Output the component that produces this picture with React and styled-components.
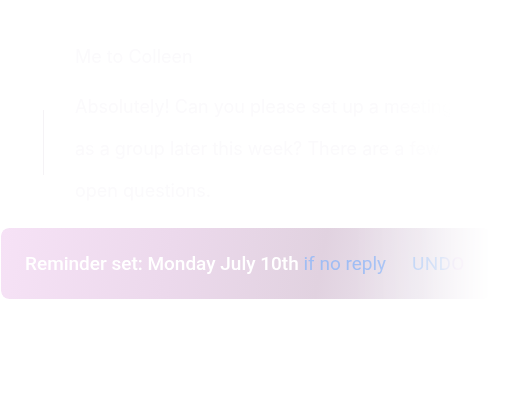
import React from 'react'
import styled, { createGlobalStyle } from 'styled-components'

const Global = createGlobalStyle`
  html, body {
    margin: 0;
    padding: 0;
    background: #ffffff;
  }
  body {
    width: 512px;
    height: 410px;
    overflow: hidden;
    font-family: Inter, "Noto Sans", sans-serif;
  }
`

function App() {
  return (
    <Page>
      <Global />
      <Thread>
        <Rule />
        <Message>
          <From>Me to Colleen</From>
          <Body>
            Absolutely! Can you please set up a meeting
            <br />
            as a group later this week? There are a few
            <br />
            open questions.
          </Body>
        </Message>
      </Thread>
      <Snackbar>
        <Label>
          Reminder set: Monday July 10th <Hint>if no reply</Hint>
        </Label>
        <Undo>UNDO</Undo>
      </Snackbar>
    </Page>
  )
}

export default App

const Page = styled.div`
  display: flex;
  flex-direction: column;
  padding-top: 45px;
`

const Thread = styled.div`
  display: flex;
  align-items: flex-start;
  padding-left: 43px;
  height: 183px;
`

const Rule = styled.div`
  width: 1px;
  height: 65px;
  margin-top: 65px;
  background: #f5f3f6;
`

const Message = styled.div`
  display: flex;
  flex-direction: column;
  margin-left: 31px;
  color: #fbfafc;
  -webkit-mask-image: linear-gradient(90deg, #000 80%, transparent 100%);
  mask-image: linear-gradient(90deg, #000 80%, transparent 100%);
  width: 380px;
  overflow: hidden;
  white-space: nowrap;
`

const From = styled.div`
  font-size: 18px;
  line-height: 24px;
`

const Body = styled.div`
  font-size: 18px;
  line-height: 42px;
  margin-top: 17px;
`

const Snackbar = styled.div`
  display: flex;
  align-items: center;
  gap: 26px;
  margin-left: 1px;
  width: 490px;
  height: 71px;
  box-sizing: border-box;
  padding-left: 24px;
  border-radius: 8px;
  background: linear-gradient(100deg, #f6e2f6 0%, #ecd9ec 35%, #e1d2e0 65%, #ece6ee 85%, #f3eff4 100%);
  -webkit-mask-image: linear-gradient(90deg, #000 72%, rgba(0,0,0,0.75) 86%, transparent 100%);
  mask-image: linear-gradient(90deg, #000 72%, rgba(0,0,0,0.75) 86%, transparent 100%);
  font-family: Roboto, "Liberation Sans", sans-serif;
  font-size: 19px;
  font-weight: 500;
`

const Label = styled.span`
  color: #ffffff;
  white-space: nowrap;
`

const Hint = styled.span`
  color: #9fbdf4;
  font-weight: 400;
`

const Undo = styled.span`
  letter-spacing: 0.3px;
  background: linear-gradient(90deg, #b5cdf5 0%, #bfd2f2 55%, #ead9ee 85%);
  -webkit-background-clip: text;
  background-clip: text;
  color: transparent;
  font-weight: 400;
`
